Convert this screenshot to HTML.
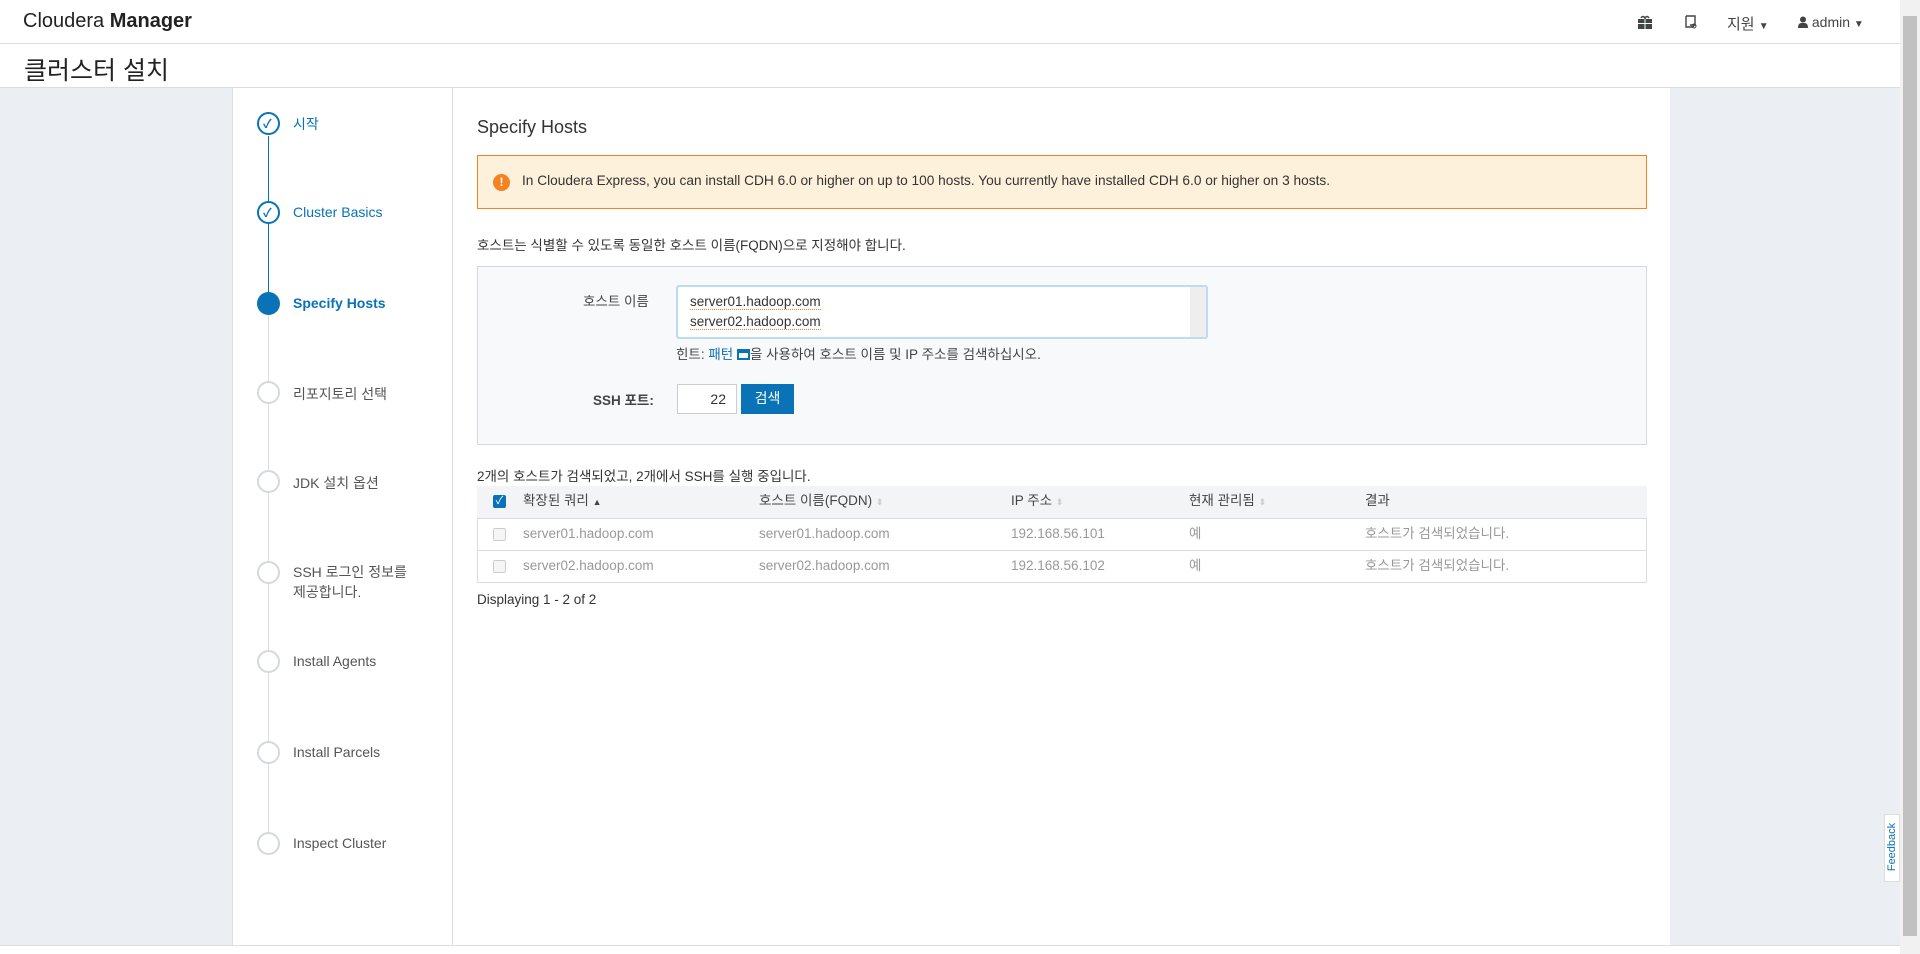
<!DOCTYPE html>
<html><head><meta charset="utf-8">
<style>
*{box-sizing:border-box;margin:0;padding:0}
body{width:1920px;height:954px;overflow:hidden;font-family:"Liberation Sans","Noto Sans CJK KR",sans-serif;font-size:14px;color:#333;background:#fff;position:relative}
.abs{position:absolute}
.nav{left:0;top:0;width:1900px;height:44px;border-bottom:1px solid #ddd;background:#fff}
.title{left:0;top:44px;width:1900px;height:44px;border-bottom:1px solid #ddd;background:#fff}
.lgray{left:0;top:88px;width:232px;height:857px;background:#ebeef2}
.rgray{left:1670px;top:88px;width:230px;height:857px;background:#ebeef2}
.wiz{left:232px;top:88px;width:221px;height:857px;background:#fff;border-left:1px solid #ddd;border-right:1px solid #ddd}
.sb{left:1900px;top:0;width:20px;height:954px;background:#f1f1f1}
.step{position:absolute;left:293px;font-size:14px;color:#555}
.circ{position:absolute;left:257px;width:23px;height:23px;border-radius:50%;border:2px solid #d5d9dd;background:#fff}
.circ.done{border-color:#0a72b6}
.circ.cur{background:#0a72b6;border-color:#0a72b6}
.row{position:absolute;left:477px;width:1170px;height:32px;border-top:1px solid #ddd;font-size:13.5px;color:#999}
.row span{position:absolute;top:7px;line-height:16px}
.cb{position:absolute;left:16px;top:9px;width:13px;height:13px;border:1px solid #ccc;border-radius:2px;background:#f5f5f5}
</style></head><body>
<div class="abs nav">
 <div class="abs" style="left:23px;top:10px;font-size:20px;color:#222">Cloudera <b style="font-weight:700">Manager</b></div>
 <svg class="abs" style="left:1637px;top:15px" width="16" height="14" viewBox="0 0 16 14"><rect x="1" y="4" width="14" height="10" fill="#444"/><rect x="7" y="2" width="2" height="12" fill="#8aa"/><path d="M4 3 Q6 0 8 3 Q10 0 12 3" fill="none" stroke="#444" stroke-width="1.5"/><rect x="1" y="8" width="14" height="1" fill="#fff"/></svg>
 <svg class="abs" style="left:1682px;top:14px" width="16" height="16" viewBox="0 0 16 16"><path d="M4 2h9v8M4 2v11h7M13 10l-2 3M8 11h6" fill="none" stroke="#444" stroke-width="1.4"/><circle cx="12" cy="12" r="2" fill="none" stroke="#444"/></svg>
 <div class="abs" style="left:1727px;top:13px;font-size:15px;color:#444">지원 <span style="font-size:10px">▼</span></div>
 <div class="abs" style="left:1798px;top:14px;font-size:14px;color:#444"><svg width="10" height="12" viewBox="0 0 10 12" style="vertical-align:-1px"><circle cx="5" cy="3.5" r="3" fill="#444"/><path d="M0 12 Q0 6 5 7 Q10 6 10 12Z" fill="#444"/></svg> admin <span style="font-size:10px">▼</span></div>
</div>
<div class="abs title"><div class="abs" style="left:24px;top:7px;font-size:25px;color:#222">클러스터 설치</div></div>
<div class="abs lgray"></div><div class="abs rgray"></div>
<div class="abs wiz"></div>
<div class="abs" style="left:268px;top:136px;width:1px;height:168px;background:#0a72b6"></div>
<div class="abs" style="left:268px;top:304px;width:1px;height:540px;background:#ddd"></div>
<div class="circ done" style="top:112px"></div><div class="abs" style="left:263px;top:115px;color:#0a72b6;font-size:12px;font-weight:bold">✓</div>
<div class="circ done" style="top:201px"></div><div class="abs" style="left:263px;top:204px;color:#0a72b6;font-size:12px;font-weight:bold">✓</div>
<div class="circ cur" style="top:292px"></div>
<div class="circ" style="top:381px"></div><div class="circ" style="top:470px"></div><div class="circ" style="top:561px"></div><div class="circ" style="top:650px"></div><div class="circ" style="top:741px"></div><div class="circ" style="top:832px"></div>
<div class="step" style="top:114px;color:#0a72b6">시작</div>
<div class="step" style="top:204px;color:#0a72b6">Cluster Basics</div>
<div class="step" style="top:295px;color:#0a72b6;font-weight:bold">Specify Hosts</div>
<div class="step" style="top:384px">리포지토리 선택</div>
<div class="step" style="top:473px">JDK 설치 옵션</div>
<div class="step" style="top:562px;line-height:20px">SSH 로그인 정보를<br>제공합니다.</div>
<div class="step" style="top:653px">Install Agents</div>
<div class="step" style="top:744px">Install Parcels</div>
<div class="step" style="top:835px">Inspect Cluster</div>

<div class="abs" style="left:477px;top:117px;font-size:18px;color:#333">Specify Hosts</div>
<div class="abs" style="left:477px;top:155px;width:1170px;height:54px;background:#fdf1db;border:1px solid #f58220">
 <div class="abs" style="left:15px;top:18px;width:17px;height:17px;border-radius:50%;background:#f58220;color:#fff;font-size:12px;font-weight:bold;text-align:center;line-height:17px">!</div>
 <div class="abs" style="left:44px;top:17px;font-size:13.7px;color:#333">In Cloudera Express, you can install CDH 6.0 or higher on up to 100 hosts. You currently have installed CDH 6.0 or higher on 3 hosts.</div>
</div>
<div class="abs" style="left:477px;top:234px;font-size:13.5px">호스트는 식별할 수 있도록 동일한 호스트 이름(FQDN)으로 지정해야 합니다.</div>
<div class="abs" style="left:477px;top:266px;width:1170px;height:179px;background:#f8f9fb;border:1px solid #d6d9dc"></div>
<div class="abs" style="left:583px;top:290px;font-size:13.5px;color:#444">호스트 이름</div>
<div class="abs" style="left:676px;top:285px;width:532px;height:54px;background:#fff;border:2px solid #bcdcef;border-radius:3px">
 <div class="abs" style="left:12px;top:5px;font-size:13.5px;line-height:20px;color:#333"><span style="border-bottom:1px dotted #f58220">server01.hadoop.com</span><br><span style="border-bottom:1px dotted #f58220">server02.hadoop.com</span></div>
 <div class="abs" style="right:0;top:0;width:16px;height:50px;background:#eee"></div>
</div>
<div class="abs" style="left:676px;top:343px;font-size:13.5px;color:#444">힌트: <span style="color:#0a72b6">패턴 <span style="display:inline-block;width:13px;height:11px;border:2px solid #0a72b6;border-top-width:4px;vertical-align:-1px"></span></span>을 사용하여 호스트 이름 및 IP 주소를 검색하십시오.</div>
<div class="abs" style="left:593px;top:389px;font-size:13.5px;font-weight:bold;color:#444">SSH 포트:</div>
<div class="abs" style="left:677px;top:384px;width:60px;height:30px;background:#fff;border:1px solid #ccc;font-size:14px;text-align:right;padding:6px 10px 0 0">22</div>
<div class="abs" style="left:741px;top:384px;width:53px;height:30px;background:#0a72b6;color:#fff;font-size:14px;text-align:center;line-height:28px">검색</div>

<div class="abs" style="left:477px;top:465px;font-size:13.5px">2개의 호스트가 검색되었고, 2개에서 SSH를 실행 중입니다.</div>
<div class="abs" style="left:477px;top:486px;width:1170px;height:97px;border:1px solid #ddd"></div>
<div class="row" style="top:486px;background:#f3f4f6;color:#444;border-top:none">
 <div class="cb" style="background:#0a72b6;border-color:#0a72b6;color:#fff;font-size:11px;line-height:11px;text-align:center">✓</div>
 <span style="left:46px">확장된 쿼리 <span style="font-size:9px;position:static">▲</span></span>
 <span style="left:282px">호스트 이름(FQDN) <span style="font-size:9px;color:#ccc;position:static">⬍</span></span>
 <span style="left:534px">IP 주소 <span style="font-size:9px;color:#ccc;position:static">⬍</span></span>
 <span style="left:712px">현재 관리됨 <span style="font-size:9px;color:#ccc;position:static">⬍</span></span>
 <span style="left:888px">결과</span>
</div>
<div class="row" style="top:518px"><div class="cb"></div><span style="left:46px">server01.hadoop.com</span><span style="left:282px">server01.hadoop.com</span><span style="left:534px">192.168.56.101</span><span style="left:712px">예</span><span style="left:888px">호스트가 검색되었습니다.</span></div>
<div class="row" style="top:550px"><div class="cb"></div><span style="left:46px">server02.hadoop.com</span><span style="left:282px">server02.hadoop.com</span><span style="left:534px">192.168.56.102</span><span style="left:712px">예</span><span style="left:888px">호스트가 검색되었습니다.</span></div>
<div class="abs" style="left:477px;top:592px;font-size:13.5px">Displaying 1 - 2 of 2</div>

<div class="abs" style="left:0;top:945px;width:1900px;height:9px;background:#fff;border-top:1px solid #ddd"></div>
<div class="abs" style="left:1884px;top:814px;width:16px;height:68px;background:#fff;border:1px solid #ddd"><div class="abs" style="left:-25px;top:26px;transform:rotate(-90deg);font-size:11px;color:#0a72b6;width:64px;text-align:center">Feedback</div></div>
<div class="abs sb"><div class="abs" style="left:3px;top:16px;width:14px;height:920px;background:#c1c1c1"></div></div>
</body></html>
